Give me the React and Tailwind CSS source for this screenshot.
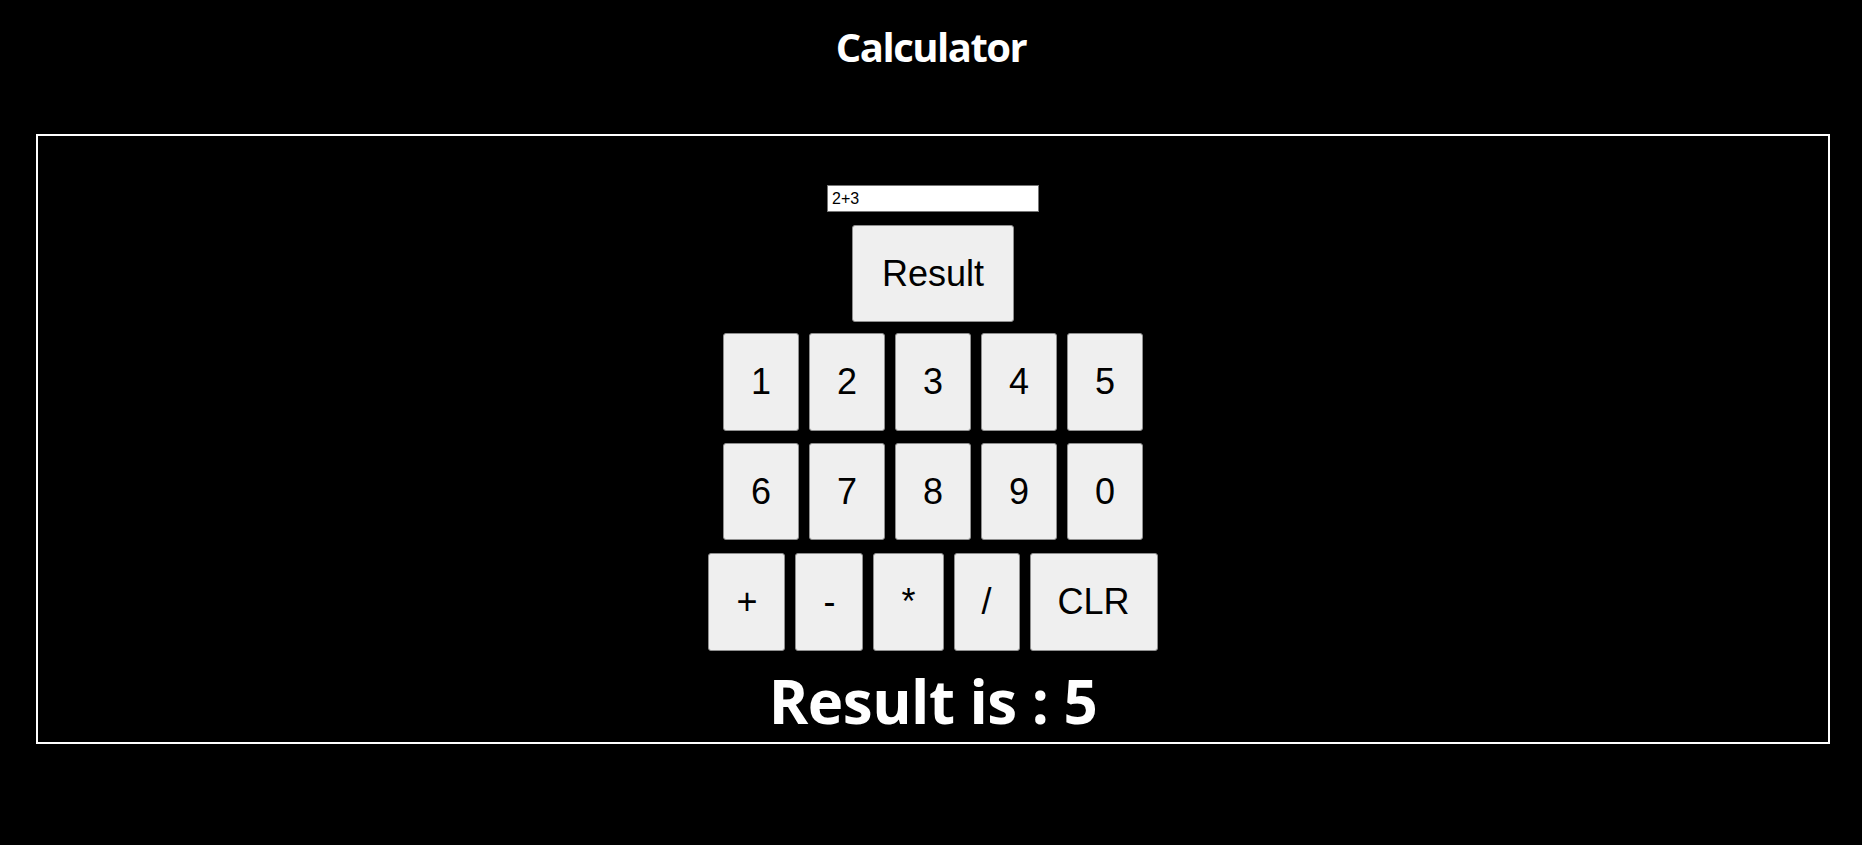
import { useState } from 'react'

const btn =
  "bg-[#efefef] text-black border border-[#8f8f8f] rounded-[3px] px-[27px] py-[27px] text-[36px] leading-[1.15] font-['Liberation_Sans',Arial,sans-serif]"

export default function App() {
  const [expr, setExpr] = useState('2+3')
  const [result, setResult] = useState(5)

  const press = (v) => setExpr((e) => e + v)
  const calc = () => {
    try {
      // eslint-disable-next-line no-new-func
      setResult(Function(`return (${expr})`)())
    } catch {
      setResult('Error')
    }
  }

  return (
    <div className="min-h-[845px] bg-black text-white font-['Open_Sans','Noto_Sans',sans-serif]">
      <h1 className="pt-[27px] text-center text-[40px] leading-none font-bold tracking-[-1.5px]">Calculator</h1>

      <div className="mt-[67px] ml-[36px] w-[1794px] border-2 border-white flex flex-col items-center pt-[49px] pb-[11px]">
        <input
          value={expr}
          onChange={(e) => setExpr(e.target.value)}
          className="w-[212px] h-[27px] bg-white text-black border border-[#767676] px-[4px] text-[16px] font-['Liberation_Sans',Arial,sans-serif] outline-none"
        />

        <button onClick={calc} className={`${btn} mt-[13px] px-[29px]`}>Result</button>

        <div className="mt-[11px] flex gap-[10px]">
          {['1', '2', '3', '4', '5'].map((d) => (
            <button key={d} onClick={() => press(d)} className={btn}>{d}</button>
          ))}
        </div>

        <div className="mt-[12px] flex gap-[10px]">
          {['6', '7', '8', '9', '0'].map((d) => (
            <button key={d} onClick={() => press(d)} className={btn}>{d}</button>
          ))}
        </div>

        <div className="mt-[13px] flex gap-[10px]">
          {['+', '-', '*', '/'].map((d) => (
            <button key={d} onClick={() => press(d)} className={btn}>{d}</button>
          ))}
          <button onClick={() => { setExpr(''); setResult('') }} className={btn}>CLR</button>
        </div>

        <h1 className="mt-[20px] text-[60px] leading-none font-bold tracking-[-0.5px]">Result is : {result}</h1>
      </div>
    </div>
  )
}
